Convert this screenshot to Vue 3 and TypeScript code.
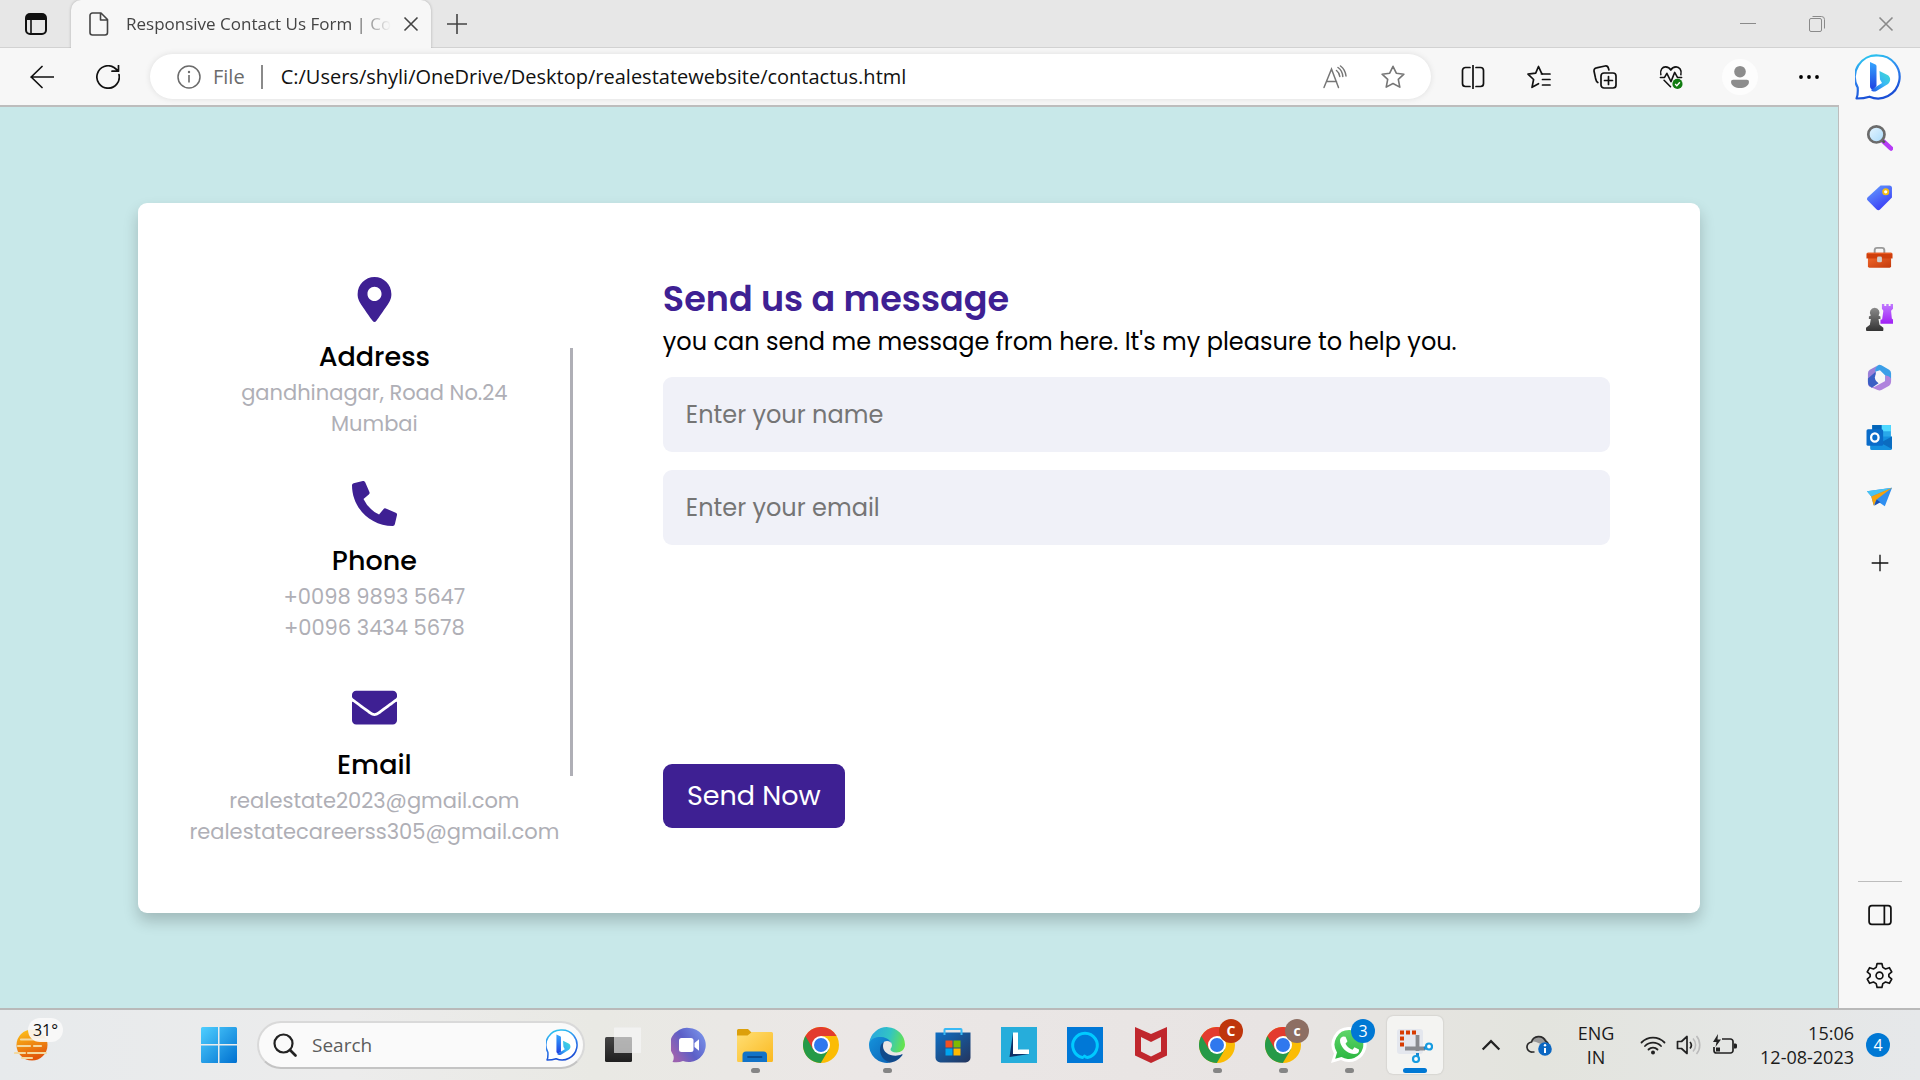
<script setup lang="ts">
import { ref } from 'vue'

interface Contact {
  topic: string
  icon: string
  lines: string[]
}

interface TaskApp {
  label: string
  icon: string
  running?: boolean
  active?: boolean
  badge?: string
  badgeClass?: string
}

const contacts: Contact[] = [
  { topic: 'Address', icon: 'pin', lines: ['gandhinagar, Road No.24', 'Mumbai'] },
  { topic: 'Phone', icon: 'phone', lines: ['+0098 9893 5647', '+0096 3434 5678'] },
  { topic: 'Email', icon: 'envelope', lines: ['realestate2023@gmail.com', 'realestatecareerss305@gmail.com'] },
]

const sideTools = [
  { label: 'Search', icon: 'lens' },
  { label: 'Shopping', icon: 'tag' },
  { label: 'Tools', icon: 'toolbox' },
  { label: 'Games', icon: 'chess' },
  { label: 'Microsoft 365', icon: 'm365' },
  { label: 'Outlook', icon: 'outlook' },
  { label: 'Drop', icon: 'plane' },
]

const pageActions = [
  { label: 'Split screen', icon: 'split' },
  { label: 'Favorites', icon: 'favorites' },
  { label: 'Collections', icon: 'collections' },
  { label: 'Browser essentials', icon: 'essentials' },
]

const apps: TaskApp[] = [
  { label: 'Task view', icon: 'taskview' },
  { label: 'Chat', icon: 'chat' },
  { label: 'File Explorer', icon: 'explorer', running: true },
  { label: 'Chrome', icon: 'chrome' },
  { label: 'Edge', icon: 'edge', running: true },
  { label: 'Microsoft Store', icon: 'store' },
  { label: 'Lenovo', icon: 'lenovo' },
  { label: 'Alexa', icon: 'alexa' },
  { label: 'McAfee', icon: 'mcafee' },
  { label: 'Chrome profile 1', icon: 'chrome', running: true, badge: 'C', badgeClass: 'red' },
  { label: 'Chrome profile 2', icon: 'chrome', running: true, badge: 'c', badgeClass: 'brown' },
  { label: 'WhatsApp', icon: 'whatsapp', running: true, badge: '3', badgeClass: 'blue' },
  { label: 'Snipping Tool', icon: 'snip', running: true, active: true },
]

const url = ref('C:/Users/shyli/OneDrive/Desktop/realestatewebsite/contactus.html')
const name = ref('')
const email = ref('')
</script>

<template>
  <div class="desktop">
    <svg class="sprite" aria-hidden="true">
      <defs>
        <linearGradient id="gBing" x1="0" y1="0" x2="0.3" y2="1">
          <stop offset="0" stop-color="#2bd0ee" /><stop offset="0.5" stop-color="#2f86f0" /><stop offset="1" stop-color="#1a4fd6" />
        </linearGradient>
        <linearGradient id="gBingStem" x1="0" y1="0" x2="0" y2="1">
          <stop offset="0" stop-color="#35a6ff" /><stop offset="1" stop-color="#1f3fe0" />
        </linearGradient>
        <linearGradient id="gBingBowl" x1="1" y1="0" x2="0" y2="1">
          <stop offset="0" stop-color="#3fe0d0" /><stop offset="0.5" stop-color="#38b6f5" /><stop offset="1" stop-color="#1f55e8" />
        </linearGradient>
        <linearGradient id="gTag" x1="0" y1="0" x2="0.6" y2="1">
          <stop offset="0" stop-color="#67a3ff" /><stop offset="1" stop-color="#3a3df5" />
        </linearGradient>
        <linearGradient id="gLens" x1="0" y1="0" x2="1" y2="1">
          <stop offset="0" stop-color="#e8f6ff" /><stop offset="1" stop-color="#a9dafb" />
        </linearGradient>
        <linearGradient id="gPurple" x1="0" y1="0" x2="0" y2="1">
          <stop offset="0" stop-color="#c07aff" /><stop offset="1" stop-color="#a020f5" />
        </linearGradient>
        <linearGradient id="gPawn" x1="0" y1="0" x2="0" y2="1">
          <stop offset="0" stop-color="#8a8a8a" /><stop offset="1" stop-color="#333" />
        </linearGradient>
        <linearGradient id="gBox" x1="0" y1="0" x2="1" y2="1">
          <stop offset="0" stop-color="#f0662a" /><stop offset="1" stop-color="#c23a0c" />
        </linearGradient>
        <linearGradient id="gWin" x1="0" y1="0" x2="1" y2="1">
          <stop offset="0" stop-color="#4fcfff" /><stop offset="1" stop-color="#0070d0" />
        </linearGradient>
        <linearGradient id="gChat" x1="0" y1="0.6" x2="1" y2="0">
          <stop offset="0" stop-color="#9b62b0" /><stop offset="0.4" stop-color="#5b5fc7" /><stop offset="1" stop-color="#7f9cf0" />
        </linearGradient>
        <linearGradient id="gFolder" x1="0" y1="0" x2="1" y2="1">
          <stop offset="0" stop-color="#ffdf75" /><stop offset="1" stop-color="#fbb920" />
        </linearGradient>
        <linearGradient id="gStore" x1="0" y1="0" x2="1" y2="1">
          <stop offset="0" stop-color="#0f6fc4" /><stop offset="1" stop-color="#24345c" />
        </linearGradient>
        <linearGradient id="gEdgeTop" x1="0" y1="0.3" x2="1" y2="0.5">
          <stop offset="0" stop-color="#2aa6df" /><stop offset="0.55" stop-color="#32c4c4" /><stop offset="1" stop-color="#66e34f" />
        </linearGradient>
        <linearGradient id="gEdgeLow" x1="0" y1="0" x2="1" y2="1">
          <stop offset="0" stop-color="#1593dc" /><stop offset="1" stop-color="#0c62b5" />
        </linearGradient>
        <linearGradient id="gSun" x1="0" y1="0" x2="0.3" y2="1">
          <stop offset="0" stop-color="#ffc81a" /><stop offset="1" stop-color="#e2570b" />
        </linearGradient>
        <linearGradient id="gBlack" x1="0" y1="0" x2="0" y2="1">
          <stop offset="0" stop-color="#454545" /><stop offset="1" stop-color="#1f1f1f" />
        </linearGradient>
        <linearGradient id="gWa" x1="0" y1="0" x2="0" y2="1">
          <stop offset="0" stop-color="#5fd66a" /><stop offset="1" stop-color="#2db742" />
        </linearGradient>
      </defs>

      <symbol id="workspaces" viewBox="0 0 24 24">
        <rect x="2" y="2" width="20" height="20" rx="4" fill="none" stroke="#111" stroke-width="2" />
        <path d="M2 8V5a3 3 0 0 1 3-3h14a3 3 0 0 1 3 3v3z" fill="#111" /><path d="M7 8v14" stroke="#111" stroke-width="1.6" />
      </symbol>
      <symbol id="page" viewBox="0 0 20 24">
        <path d="M3.500 1h8.500l6.500 6.500V20.500a2.500 2.500 0 0 1-2.500 2.500H3.500A2.500 2.500 0 0 1 1 20.500V3.500A2.500 2.500 0 0 1 3.500 1zM11.500 1.500V8h6.500" fill="none" stroke="#444" stroke-width="1.600" stroke-linejoin="round" />
      </symbol>
      <symbol id="cross" viewBox="0 0 16 16"><path d="M1.500 1.500l13 13M14.500 1.500l-13 13" stroke="currentColor" stroke-width="1.600" fill="none" /></symbol>
      <symbol id="plus" viewBox="0 0 24 24"><path d="M12 2v20M2 12h20" stroke="currentColor" stroke-width="1.600" fill="none" /></symbol>
      <symbol id="minimize" viewBox="0 0 16 16"><path d="M0 7.500h16" stroke="currentColor" /></symbol>
      <symbol id="restore" viewBox="0 0 16 16">
        <rect x="0.500" y="2.500" width="12" height="13" rx="1.500" fill="none" stroke="currentColor" /><path d="M3.500 0.500h9a3 3 0 0 1 3 3v9" fill="none" stroke="currentColor" />
      </symbol>
      <symbol id="back" viewBox="0 0 24 24"><path d="M23.500 12H1M12 1.500L1.200 12 12 22.500" fill="none" stroke="#111" stroke-width="1.700" stroke-linejoin="round" stroke-linecap="round" /></symbol>
      <symbol id="reload" viewBox="0 0 24 24">
        <path d="M23 9.500A11.200 11.200 0 1 1 18 2.500L22.500 6M22.500 0.500V6.200H16" fill="none" stroke="#111" stroke-width="1.700" stroke-linejoin="round" stroke-linecap="round" />
      </symbol>
      <symbol id="info" viewBox="0 0 24 24">
        <circle cx="12" cy="12" r="11" fill="none" stroke="#6b6b6b" stroke-width="1.500" /><path d="M12 10v7.500" stroke="#6b6b6b" stroke-width="1.600" /><circle cx="12" cy="7" r="1.200" fill="#6b6b6b" />
      </symbol>
      <symbol id="readaloud" viewBox="0 0 24 24">
        <path d="M1 22.500L8.500 4l7 18.500M3.500 16.500h10M13.500 5.500c2 1.500 3 3.500 3.300 6M15 2.500c3 2 4.500 5 4.800 9M17.500 1c3.500 2.500 5 6 5.500 10" fill="none" stroke="#767676" stroke-width="1.500" stroke-linecap="round" />
      </symbol>
      <symbol id="star" viewBox="0 0 24 24">
        <path d="M12 1.300l3.300 6.900 7.600 1-5.600 5.200 1.500 7.700L12 18.500l-6.800 3.600 1.500-7.700L1.100 9.200l7.600-1z" fill="none" stroke="#767676" stroke-width="1.600" stroke-linejoin="round" />
      </symbol>
      <symbol id="split" viewBox="0 0 24 24">
        <path d="M9 2.500H4.500A3 3 0 0 0 1.500 5.500v13a3 3 0 0 0 3 3H9M15 2.500h4.500a3 3 0 0 1 3 3v13a3 3 0 0 1-3 3H15M12 0.500v23" fill="none" stroke="#111" stroke-width="1.700" stroke-linecap="round" />
      </symbol>
      <symbol id="favorites" viewBox="0 0 24 24">
        <path d="M15.500 9l-1-.8L11.500 1.500 8.700 8.200 1 9.200l5.600 5.300L5 22.300l6.500-3.600M14.500 9H23M15.500 14.500H23M15.500 20H23" fill="none" stroke="#111" stroke-width="1.700" stroke-linecap="round" stroke-linejoin="round" />
      </symbol>
      <symbol id="collections" viewBox="0 0 24 24">
        <rect x="8" y="8" width="15" height="15" rx="3" fill="none" stroke="#111" stroke-width="1.700" />
        <path d="M15.500 11.500v8M11.500 15.500h8M4.800 17.500C3 16.500 3 15 2.500 13L1.100 6.500C.7 4.500 1.800 3.200 3.500 2.900l8.500-1.900c1.800-.4 3 .6 3.500 2.500l.4 1.500" fill="none" stroke="#111" stroke-width="1.700" stroke-linecap="round" />
      </symbol>
      <symbol id="essentials" viewBox="0 0 26 26">
        <path d="M2 10.500C.8 5 4 2 7 2c2.500 0 4.500 1 5.800 3.500C14 3 16 2 18.500 2c3.500 0 6.500 3.500 5.200 8.500M1.500 13.500H6L8.500 9l4.500 9 4-10 3 5.500h4.500M5.500 16.500l7 7" fill="none" stroke="#111" stroke-width="1.700" stroke-linejoin="round" stroke-linecap="round" />
        <circle cx="20" cy="20.500" r="5.500" fill="#107c10" /><path d="M17.500 20.700l1.800 1.800 3.300-3.800" fill="none" stroke="#fff" stroke-width="1.500" />
      </symbol>
      <symbol id="profile" viewBox="0 0 34 34">
        <circle cx="17" cy="17" r="17" fill="#fdfdfd" /><circle cx="17" cy="12" r="5.500" fill="#8c8c8c" /><path d="M10.500 19.500h13a2 2 0 0 1 2 2c0 4-4.500 6-8.500 6s-8.500-2-8.500-6a2 2 0 0 1 2-2z" fill="#8c8c8c" />
      </symbol>
      <symbol id="dots" viewBox="0 0 24 24"><circle cx="4" cy="12" r="1.900" /><circle cx="12" cy="12" r="1.900" /><circle cx="20" cy="12" r="1.900" /></symbol>
      <symbol id="bing" viewBox="0 0 46 46">
        <path d="M23 1.500a21.500 21.500 0 1 1-8.500 41.200C10.500 44 6 44.500 1.500 44.500c1.500-3 1.500-6 1.200-11A21.500 21.500 0 0 1 23 1.500z" fill="#fff" stroke="url(#gBing)" stroke-width="2.200" stroke-linejoin="round" />
        <path d="M15 8l5.500 2.500c.6.300 1 .9 1 1.500v20L18 36c-1.800-.6-3-2-3-4z" fill="url(#gBingStem)" />
        <path d="M24.500 17l8 4c3.500 2 3.500 6.500.5 9L21.500 37c-2 1-4.200.6-5.500-1l11-7-2-3.500z" fill="url(#gBingBowl)" />
      </symbol>

      <symbol id="lens" viewBox="0 0 26 26">
        <path d="M16.500 16.500L24 23.500" stroke="#b63bf5" stroke-width="4.500" stroke-linecap="round" /><path d="M14 14l4 4" stroke="#555" stroke-width="2.500" />
        <circle cx="10" cy="10" r="7.800" fill="url(#gLens)" stroke="#6b6b6b" stroke-width="2.600" />
      </symbol>
      <symbol id="tag" viewBox="0 0 26 26">
        <path d="M14 1.500h8.500A2.500 2.500 0 0 1 25 4v9l-11.500 11.500a2.300 2.300 0 0 1-3.200 0L1.700 16a2.300 2.300 0 0 1 0-3.200z" fill="url(#gTag)" /><circle cx="19" cy="7.500" r="2.500" fill="#fff" stroke="#f4bd12" stroke-width="1.800" />
      </symbol>
      <symbol id="toolbox" viewBox="0 0 28 24">
        <path d="M9 8V4.500A2.500 2.500 0 0 1 11.500 2h5A2.500 2.500 0 0 1 19 4.500V8" fill="none" stroke="#9a9a9a" stroke-width="2" />
        <rect x="2" y="12" width="24" height="10.500" rx="1.500" fill="url(#gBox)" /><path d="M2 7h24a1.500 1.500 0 0 1 1.500 1.500V13h-27V8.500A1.500 1.500 0 0 1 2 7z" fill="#cf3f0c" /><path d="M2 7h24l1 1H1z" fill="#f0662a" /><rect x="11.500" y="11" width="5" height="6" rx="1.500" fill="#cfcfcf" />
      </symbol>
      <symbol id="chess" viewBox="0 0 28 28">
        <path d="M16.500 0h2.500v2h2V0h2.500v2h2V0H28v5l-2 2 .8 8 1.200 1v4.500H15V16h1.700l1.300-9-1.500-2z" fill="url(#gPurple)" />
        <path d="M9 4a5 5 0 0 1 4 8l2 1v2.500h-2l1 6 4 3v2.500c0 .6-.4 1-1 1H1c-.6 0-1-.4-1-1v-2.500l4-3 1-6H3V13l2-1a5 5 0 0 1 4-8z" fill="url(#gPawn)" />
      </symbol>
      <symbol id="m365" viewBox="0 0 26 28">
        <path d="M12 1L3 6Q1 7.200 1 9.500v11c0 1.500 1 2.500 2 3l6-4V7c0-3 1-5 3-6z" fill="#9b80d8" />
        <path d="M12 1c-2.500 1.500-3.500 3.500-3.500 6v1l5-1.500 5.500 5.500V23l5-4q1-1 1-2.500V9.500Q25 7.200 23 6l-8-4.600Q13.500.600 12 1z" fill="#3b9fe8" />
        <path d="M19 12v5.500L8 23.500l-5.500-.2L11 27q2 1 4 0l8-4.500q2-1.500 2-4V16c0-2.500-4-4-6-4z" fill="#b084dd" />
        <path d="M9 8v9l3 3-7 4.500Q1 22.500 1 18.500V15l8-7z" fill="#3a5fc4" /><circle cx="13" cy="14" r="4.800" fill="#f7f7f7" />
      </symbol>
      <symbol id="outlook" viewBox="0 0 26 26">
        <path d="M6 1h18v14H6z" fill="#28a8ea" /><path d="M15 1h9v6h-9z" fill="#50d9ff" /><path d="M6 1h9v6H6z" fill="#0364b8" /><path d="M4 12l21 0v11.500a1.500 1.500 0 0 1-1.500 1.500h-18A1.500 1.500 0 0 1 4 23.500z" fill="#1490df" /><path d="M25 12v12L14 18z" fill="#0b6cc0" />
        <rect x="0.500" y="5" width="16" height="16" rx="1.500" fill="#0a6cc9" /><ellipse cx="8.500" cy="13" rx="3.600" ry="4" fill="none" stroke="#fff" stroke-width="2.200" />
      </symbol>
      <symbol id="plane" viewBox="0 0 28 24">
        <path d="M1 5.500L27 2 19.500 21l-7.500-5-4 4-2.500-9z" fill="#2f8ff0" /><path d="M1 5.500L27 2 5.500 11z" fill="#48c3f2" /><path d="M5.500 11L27 2 11 14l-3 6.500z" fill="#f5a30c" /><path d="M11 14l4 3-6.500 3.500z" fill="#174fb5" />
      </symbol>
      <symbol id="panel" viewBox="0 0 22 20"><rect x="1" y="1.500" width="20" height="17" rx="2.500" fill="none" stroke="#111" stroke-width="1.600" /><path d="M15 1.500v17" stroke="#111" stroke-width="1.600" /></symbol>
      <symbol id="gear" viewBox="0 0 26 26">
        <path d="M10.700 1.500h4.600l.9 3.700 2.600 1.500 3.700-1.200 2.300 4-2.800 2.500v2l2.800 2.500-2.300 4-3.700-1.200-2.600 1.500-.9 3.700h-4.600l-.9-3.700-2.600-1.500-3.700 1.200-2.300-4L4 14V12L1.200 9.500l2.300-4 3.700 1.200 2.600-1.500z" fill="none" stroke="#111" stroke-width="1.600" stroke-linejoin="round" /><circle cx="13" cy="13" r="3.300" fill="none" stroke="#111" stroke-width="1.600" />
      </symbol>

      <symbol id="pin" viewBox="0 0 512 512">
        <path transform="translate(64 0)" d="M172.268 501.670C26.970 291.031 0 269.413 0 192 0 85.961 85.961 0 192 0s192 85.961 192 192c0 77.413-26.970 99.031-172.268 309.670-9.535 13.774-29.930 13.773-39.464 0zM192 272c44.183 0 80-35.817 80-80s-35.817-80-80-80-80 35.817-80 80 35.817 80 80 80z" />
      </symbol>
      <symbol id="phone" viewBox="0 0 512 512">
        <path d="M497.390 361.800l-112-48a24 24 0 0 0-28 6.900l-49.600 60.600A370.660 370.660 0 0 1 130.600 204.110l60.600-49.600a23.940 23.940 0 0 0 6.900-28l-48-112A24.160 24.160 0 0 0 122.600.610l-104 24A24 24 0 0 0 0 48c0 256.500 207.900 464 464 464a24 24 0 0 0 23.400-18.600l24-104a24.290 24.290 0 0 0-14.010-27.600z" />
      </symbol>
      <symbol id="envelope" viewBox="0 0 512 512">
        <path d="M502.300 190.800c3.900-3.100 9.700-.2 9.700 4.700V400c0 26.500-21.500 48-48 48H48c-26.500 0-48-21.500-48-48V195.600c0-5 5.700-7.800 9.700-4.700 22.400 17.400 52.100 39.500 154.100 113.600 21.100 15.400 56.700 47.800 92.200 47.600 35.700.3 72-32.800 92.300-47.600 102-74.100 131.600-96.300 154-113.700zM256 320c23.200.4 56.600-29.200 73.400-41.400 132.700-96.300 142.800-104.700 173.400-128.700 5.800-4.500 9.200-11.500 9.200-18.900v-19c0-26.500-21.500-48-48-48H48c-26.500 0-48 21.500-48 48v19c0 7.400 3.400 14.300 9.200 18.900 30.600 23.900 40.700 32.400 173.400 128.700 16.800 12.200 50.200 41.800 73.400 41.400z" />
      </symbol>

      <symbol id="weather" viewBox="0 0 36 36">
        <circle cx="18" cy="18" r="15.500" fill="url(#gSun)" />
        <path d="M7 12.500h26M4 19h12M20 19h7M1 26h10M14 26h18M8 31h10" stroke="#f3d9a0" stroke-width="2.200" stroke-linecap="round" />
      </symbol>
      <symbol id="windows" viewBox="0 0 36 36">
        <path d="M0 1.500A1.500 1.500 0 0 1 1.500 0H17v17H0zM18.500 0h16A1.500 1.500 0 0 1 36 1.500V17H18.500zM0 18.500h17V36H1.500A1.500 1.500 0 0 1 0 34.500zM18.500 18.500H36v16a1.500 1.500 0 0 1-1.500 1.500h-16z" fill="url(#gWin)" />
      </symbol>
      <symbol id="magnifier" viewBox="0 0 24 24"><circle cx="10.500" cy="10.500" r="9" fill="none" stroke="#222" stroke-width="2.200" /><path d="M17 17l5.500 5.500" stroke="#222" stroke-width="2.600" stroke-linecap="round" /></symbol>
      <symbol id="taskview" viewBox="0 0 36 36"><rect x="0" y="10" width="27" height="25" rx="1.500" fill="url(#gBlack)" /><rect x="9" y="0.500" width="27" height="25.500" rx="1.500" fill="#f6f6f6" fill-opacity="0.350" /><path d="M9 .5h27V26h-9V10H9z" fill="#f2f2f2" fill-opacity="0.850" /><path d="M9 10h18v16H9z" fill="#c9c9c9" fill-opacity="0.700" /></symbol>
      <symbol id="chat" viewBox="0 0 36 36">
        <path d="M18 1a17 17 0 1 1-6 33q-4.500 2-10.500 1 2-3 .8-7A17 17 0 0 1 18 1z" fill="url(#gChat)" /><rect x="8" y="11" width="14.500" height="14" rx="2.500" fill="#fff" /><path d="M23.500 16l4.500-3.800v11.600L23.500 20z" fill="#fff" />
      </symbol>
      <symbol id="explorer" viewBox="0 0 36 36">
        <path d="M0 3.500A1.500 1.500 0 0 1 1.500 2H11l4 4-4 4H0z" fill="#dca00b" /><path d="M0 8.500h10.500L15 5h19.500A1.500 1.500 0 0 1 36 6.500v27A1.500 1.500 0 0 1 34.500 35h-33A1.500 1.500 0 0 1 0 33.500z" fill="url(#gFolder)" />
        <path d="M5.500 35v-7A3.500 3.500 0 0 1 9 24.500h17.500A3.500 3.500 0 0 1 30 28v7z" fill="#1273c8" /><path d="M11 30h13.500" stroke="#0a4c92" stroke-width="1.800" stroke-linecap="round" />
      </symbol>
      <symbol id="chrome" viewBox="0 0 36 36">
        <circle cx="18" cy="18" r="18" fill="#fbbc04" />
        <path d="M18 18L2.400 9A18 18 0 0 0 17.800 36L25.800 22.500z" fill="#259a48" />
        <path d="M18 18L10.200 22.500 2.400 9A18 18 0 0 1 33.600 9H18z" fill="#e33b2e" />
        <circle cx="18" cy="18" r="9" fill="#fff" /><circle cx="18" cy="18" r="7" fill="#2f78ee" />
      </symbol>
      <symbol id="edge" viewBox="0 0 36 36">
        <path d="M.2 15.500A18 18 0 0 1 36 17.500c0 5-4 8-8.500 8-4 0-6-1.500-6-3 0-1.300 1.500-2 1.500-4.500 0-3.500-4-6.500-9-6.500C8.500 11.500 3.500 13 .2 15.500z" fill="url(#gEdgeTop)" />
        <path d="M.2 15.500C3 11 8 9.500 12.500 10c6 .6 10 4 10.500 8-.5-2.500-2.500-4-5-4-3.500 0-6 3.500-6 8 0 7 5 11.500 10 13.500A18 18 0 0 1 .2 15.500z" fill="url(#gEdgeLow)" />
        <path d="M15 14.700c-3 1.500-4 4.500-4 8C11 30 17 35 22 35.500c5-.7 9-4 11.500-7.500.3-.6-.2-1-.8-.7-2 1-4 1.400-6.200 1.400-7 0-12.500-4-12.500-9.500 0-1.700.5-3.300 1-4.500z" fill="#114a8b" />
      </symbol>
      <symbol id="store" viewBox="0 0 36 36">
        <path d="M.5 5.500h35v25A5 5 0 0 1 30.500 35.500h-25A5 5 0 0 1 .5 30.500z" fill="url(#gStore)" /><path d="M9.500 8V2.800Q9.500 2 10.300 2h15.400q.8 0 .8.800V8" fill="none" stroke="#39b9f5" stroke-width="2" />
        <path d="M10.500 13.500h7v7h-7z" fill="#f25022" /><path d="M18.500 13.500h7v7h-7z" fill="#7fba00" /><path d="M10.500 21.500h7v7h-7z" fill="#00a4ef" /><path d="M18.500 21.500h7v7h-7z" fill="#ffb900" />
      </symbol>
      <symbol id="lenovo" viewBox="0 0 36 36"><path d="M0 0h36v36H0z" fill="#26addb" /><path d="M12 6L8.500 30 28 27 16 22z" fill="#0f2f66" /><path d="M12 5.500h5v17h11V27H12z" fill="#fff" /></symbol>
      <symbol id="alexa" viewBox="0 0 36 36"><path d="M0 0h36v36H0z" fill="#0078d7" /><path d="M15.500 30.500A12.300 12.300 0 1 1 20.500 30.500Q19 30.500 17.500 29" fill="none" stroke="#00caff" stroke-width="3" stroke-linecap="round" /></symbol>
      <symbol id="mcafee" viewBox="0 0 36 36"><path d="M2 0l16 7L34 0v28.500L18 36 2 28.500zM8 10v14.500l10 5 10-5V10l-10 5z" fill="#c0272d" /></symbol>
      <symbol id="whatsapp" viewBox="0 0 36 36">
        <path d="M18.500 0A17.500 17.500 0 1 1 10 33L0 36l3-9.500A17.500 17.500 0 0 1 18.500 0z" fill="#fff" /><path d="M18.500 3A14.500 14.500 0 1 1 10.500 30L4.200 31.700 6 25.500A14.500 14.500 0 0 1 18.500 3z" fill="url(#gWa)" />
        <path d="M12 9.500l2.500.3 2 4.500-2 2.500q2.500 4.500 7 6l2-2.500 4.500 2.200q.5 4.500-5 4.500C15 26.500 9 19 9 13.500q0-3 3-4z" fill="#fff" />
      </symbol>
      <symbol id="snip" viewBox="0 0 36 36">
        <rect x="0" y="2" width="26" height="25" rx="3" fill="#e4e7ee" />
        <path d="M3 3.500h4v4H3zM9 3.500h4v4H9zM15 3.500h4v4h-4zM3 9.500h4v4H3zM3 15.500h4v4H3z" fill="#d83b01" />
        <path d="M20.500 8v16M8 21.500h20" stroke="#87898e" stroke-width="3.800" /><path d="M27 21.500l3-1M20.500 26v4" stroke="#1a86cf" stroke-width="3" /><circle cx="32" cy="19.500" r="3" fill="#fff" stroke="#169be0" stroke-width="2.200" /><circle cx="19" cy="32" r="3" fill="#fff" stroke="#169be0" stroke-width="2.200" />
      </symbol>
      <symbol id="chevron" viewBox="0 0 18 18"><path d="M1.500 13L9 5.500l7.500 7.500" fill="none" stroke="#222" stroke-width="2" /></symbol>
      <symbol id="cloud" viewBox="0 0 26 26">
        <path d="M2.500 14C4 9 8 9 10 10l12 5v-3C21 6 17 4 13 4.500 9 4.500 7 7 6 10q-3 1-3.500 4z" fill="#999" /><path d="M8.500 20H6.500a5 5 0 0 1-1-10 7.500 7.500 0 0 1 14-1q2.500 1 3 4" fill="none" stroke="#2a2a2a" stroke-width="1.700" />
        <circle cx="19" cy="17" r="6.800" fill="#0b67c2" /><path d="M19 16v5" stroke="#fff" stroke-width="2" /><circle cx="19" cy="13.300" r="1.200" fill="#fff" />
      </symbol>
      <symbol id="wifi" viewBox="0 0 26 22">
        <path d="M1.500 8.500a16 16 0 0 1 23 0M5 12a11 11 0 0 1 16 0M8.500 15.500a6.300 6.300 0 0 1 9 0" fill="none" stroke="#222" stroke-width="1.800" stroke-linecap="round" /><circle cx="13" cy="18.500" r="2" fill="#222" />
      </symbol>
      <symbol id="sound" viewBox="0 0 26 22">
        <path d="M1.500 7.500h4l5.500-5v17l-5.500-5h-4z" fill="none" stroke="#222" stroke-width="1.700" stroke-linejoin="round" /><path d="M14 8a5 5 0 0 1 0 6.500" fill="none" stroke="#222" stroke-width="1.700" /><path d="M17 4.500a9.500 9.500 0 0 1 0 13M20.500 2a14 14 0 0 1 0 18" fill="none" stroke="#bbb" stroke-width="1.600" />
      </symbol>
      <symbol id="battery" viewBox="0 0 26 22">
        <path d="M10 5h8.500A2.500 2.500 0 0 1 21 7.500v9a2.500 2.500 0 0 1-2.500 2.500h-14A2.500 2.500 0 0 1 2 16.500V13" fill="none" stroke="#222" stroke-width="1.700" /><path d="M22 9.500h1.500q1.500 0 1.500 1.500v2q0 1.500-1.500 1.500H22z" fill="#222" /><path d="M6 0L1 8h3.500L3.500 13 9 5.500H5.500zM4 13.500h4v4H4z" fill="#222" />
      </symbol>
    </svg>

    <header class="tabstrip">
      <button class="icon-btn workspace" aria-label="Tab actions"><svg class="i24"><use href="#workspaces" /></svg></button>
      <div class="tab">
        <svg class="file"><use href="#page" /></svg>
        <span class="tab-title">Responsive Contact Us Form | Co</span>
        <button class="icon-btn tab-close" aria-label="Close tab"><svg class="i16"><use href="#cross" /></svg></button>
      </div>
      <button class="icon-btn new-tab" aria-label="New tab"><svg class="i24"><use href="#plus" /></svg></button>
      <div class="window-controls">
        <button class="icon-btn" aria-label="Minimize"><svg class="i16"><use href="#minimize" /></svg></button>
        <button class="icon-btn" aria-label="Restore"><svg class="i16"><use href="#restore" /></svg></button>
        <button class="icon-btn" aria-label="Close"><svg class="i16"><use href="#cross" /></svg></button>
      </div>
    </header>

    <nav class="toolbar" aria-label="Browser toolbar">
      <div class="nav-group">
        <button class="icon-btn" aria-label="Back"><svg class="i24"><use href="#back" /></svg></button>
        <button class="icon-btn" aria-label="Refresh"><svg class="i24"><use href="#reload" /></svg></button>
      </div>
      <div class="address">
        <svg class="i24"><use href="#info" /></svg>
        <label class="scheme" for="url">File</label>
        <span class="bar"></span>
        <input id="url" v-model="url" type="text" />
        <button class="icon-btn" aria-label="Read aloud"><svg class="i24"><use href="#readaloud" /></svg></button>
        <button class="icon-btn" aria-label="Add to favorites"><svg class="i24"><use href="#star" /></svg></button>
      </div>
      <div class="nav-group">
        <button v-for="a in pageActions" :key="a.icon" class="icon-btn" :aria-label="a.label"><svg class="i24"><use :href="'#' + a.icon" /></svg></button>
      </div>
      <div class="menu-group">
        <button class="icon-btn" aria-label="Profile"><svg class="i36"><use href="#profile" /></svg></button>
        <button class="icon-btn" aria-label="Settings and more"><svg class="i24"><use href="#dots" /></svg></button>
        <button class="icon-btn" aria-label="Bing chat"><svg class="i46"><use href="#bing" /></svg></button>
      </div>
    </nav>

    <div class="browser">
      <main class="page">
        <section class="card">
          <div class="contacts">
            <div v-for="c in contacts" :key="c.topic" class="contact">
              <svg class="contact-icon"><use :href="'#' + c.icon" /></svg>
              <h2>{{ c.topic }}</h2>
              <p v-for="line in c.lines" :key="line">{{ line }}</p>
            </div>
          </div>
          <div class="divider"></div>
          <form class="message" @submit.prevent>
            <h1>Send us a message</h1>
            <p>you can send me message from here. It's my pleasure to help you.</p>
            <input v-model="name" type="text" placeholder="Enter your name" aria-label="Enter your name" />
            <input v-model="email" type="text" placeholder="Enter your email" aria-label="Enter your email" />
            <button type="submit">Send Now</button>
          </form>
        </section>
      </main>
      <aside class="sidebar">
        <div class="side-group">
          <button v-for="t in sideTools" :key="t.icon" class="icon-btn" :aria-label="t.label"><svg class="i28"><use :href="'#' + t.icon" /></svg></button>
          <button class="icon-btn add" aria-label="Customize"><svg class="i20"><use href="#plus" /></svg></button>
        </div>
        <div class="side-group side-bottom">
          <button class="icon-btn" aria-label="Toggle sidebar"><svg class="i24"><use href="#panel" /></svg></button>
          <button class="icon-btn" aria-label="Settings"><svg class="i28"><use href="#gear" /></svg></button>
        </div>
      </aside>
    </div>

    <footer class="taskbar">
      <button class="weather" aria-label="Weather"><svg class="i36"><use href="#weather" /></svg><span class="temp">31°</span></button>
      <div class="apps">
        <button class="app" aria-label="Start"><svg class="i36"><use href="#windows" /></svg></button>
        <label class="search">
          <svg class="i24"><use href="#magnifier" /></svg>
          <input type="text" placeholder="Search" aria-label="Search" />
          <svg class="i32"><use href="#bing" /></svg>
        </label>
        <button v-for="app in apps" :key="app.label" class="app" :class="{ running: app.running, active: app.active }" :aria-label="app.label">
          <svg class="i36"><use :href="'#' + app.icon" /></svg>
          <span v-if="app.badge" class="badge" :class="app.badgeClass">{{ app.badge }}</span>
        </button>
      </div>
      <div class="tray">
        <svg class="i20"><use href="#chevron" /></svg>
        <svg class="i26 cloud"><use href="#cloud" /></svg>
        <div class="lang"><span>ENG</span><span>IN</span></div>
        <div class="status">
          <svg class="i26"><use href="#wifi" /></svg>
          <svg class="i26"><use href="#sound" /></svg>
          <svg class="i26"><use href="#battery" /></svg>
        </div>
        <div class="clock"><span>15:06</span><span>12-08-2023</span></div>
        <span class="count">4</span>
      </div>
    </footer>
  </div>
</template>

<style>
body {
  margin: 0;
}
</style>

<style scoped>
* {
  box-sizing: border-box;
}
.desktop {
  min-height: 100vh;
  display: flex;
  flex-direction: column;
  font-family: "Segoe UI", "Open Sans", "Noto Sans", sans-serif;
  color: #1b1b1b;
}
.sprite {
  position: absolute;
  width: 0;
  height: 0;
}
svg {
  display: block;
  flex: none;
}
.i16 { width: 16px; height: 16px; }
.i20 { width: 20px; height: 20px; }
.i24 { width: 24px; height: 24px; }
.i26 { width: 26px; height: 26px; }
.i28 { width: 27px; height: 27px; }
.i32 { width: 32px; height: 32px; }
.i36 { width: 36px; height: 36px; }
.i46 { width: 46px; height: 46px; }
.icon-btn {
  width: 44px;
  height: 44px;
  padding: 0;
  border: 0;
  background: none;
  display: flex;
  align-items: center;
  justify-content: center;
  flex: none;
  color: inherit;
}

.tabstrip {
  display: flex;
  align-items: center;
  height: 48px;
  padding-left: 14px;
  background: #e7e7e7;
  border-bottom: 1px solid #d2d2d2;
}
.tab {
  display: flex;
  align-items: center;
  width: 360px;
  height: 48px;
  margin-left: 13px;
  margin-bottom: -1px;
  padding: 0 4px 0 18px;
  background: #f7f7f7;
  border-radius: 10px 10px 0 0;
  box-shadow: 0 0 3px rgba(0, 0, 0, 0.25);
  clip-path: inset(0 -4px 0 -4px);
  color: #444;
}
.file {
  width: 20px;
  height: 24px;
}
.tab-title {
  flex: 1;
  margin-left: 17px;
  white-space: nowrap;
  font-size: 17px;
  line-height: 24px;
  -webkit-mask-image: linear-gradient(to right, #000 85%, transparent);
  mask-image: linear-gradient(to right, #000 85%, transparent);
}
.tab-close {
  width: 40px;
}
.new-tab {
  margin-left: 4px;
  color: #444;
}
.window-controls {
  display: flex;
  gap: 25px;
  margin-left: auto;
  padding-right: 12px;
  color: #8a8a8a;
}

.toolbar {
  display: flex;
  align-items: center;
  height: 57px;
  padding: 0 20px;
  background: #f7f7f7;
}
.nav-group {
  display: flex;
  gap: 22px;
}
.menu-group {
  display: flex;
  gap: 25px;
  margin-left: 25px;
}
.address {
  flex: 1;
  display: flex;
  align-items: center;
  height: 45px;
  margin: 0 20px;
  padding: 0 16px 0 27px;
  border-radius: 23px;
  background: #fff;
  box-shadow: 0 0 6px rgba(0, 0, 0, 0.1);
}
.address .icon-btn + .icon-btn {
  margin-left: 14px;
}
.scheme {
  margin-left: 12px;
  font-size: 20px;
  color: #6b6b6b;
}
.bar {
  width: 2px;
  height: 24px;
  margin: 0 18px 0 16px;
  background: #8a8a8a;
}
.address input {
  flex: 1;
  min-width: 0;
  padding: 0;
  border: 0;
  outline: 0;
  background: none;
  font-family: inherit;
  font-size: 20px;
  color: #111;
}

.browser {
  flex: 1;
  display: flex;
}
.page {
  flex: 1;
  display: flex;
  align-items: center;
  justify-content: center;
  padding: 40px 0;
  border-top: 2px solid #bdbdbd;
  border-right: 1px solid #bdbdbd;
  background: #c8e8e9;
  font-family: "Poppins", "Inter", sans-serif;
}
.card {
  display: flex;
  width: 85%;
  padding: 74px 90px 66px 52px;
  border-radius: 9px;
  background: #fff;
  box-shadow: 0 8px 15px rgba(0, 0, 0, 0.2);
}
.contacts {
  display: flex;
  flex-direction: column;
  gap: 42px;
  width: 369px;
}
.contact {
  display: flex;
  flex-direction: column;
  align-items: center;
  color: #afafb6;
}
.contact-icon {
  width: 45px;
  height: 45px;
  margin-bottom: 15px;
  fill: #3e2093;
}
.contact h2 {
  margin: 0;
  font-size: 27px;
  line-height: 40px;
  font-weight: 500;
  color: #000;
}
.contact p {
  margin: 0;
  font-size: 21px;
  line-height: 31px;
  white-space: nowrap;
}
.divider {
  align-self: center;
  width: 3px;
  height: 428px;
  margin: 0 90px 0 11px;
  background: #afafb6;
}
.message {
  flex: 1;
  display: flex;
  flex-direction: column;
}
.message h1 {
  margin: 0 0 4px;
  font-size: 35px;
  line-height: 43px;
  font-weight: 600;
  color: #3e2093;
}
.message p {
  margin: 0 0 17px;
  font-size: 24px;
  line-height: 36px;
  color: #000;
}
.message input {
  height: 75px;
  margin-bottom: 18px;
  padding: 0 23px;
  border: 0;
  border-radius: 9px;
  background: #f0f1f8;
  font: inherit;
  font-size: 24px;
}
.message input::placeholder {
  color: #757575;
}
.message button {
  align-self: flex-start;
  width: 182px;
  height: 64px;
  margin: auto 0 19px;
  border: 0;
  border-radius: 9px;
  background: #3e2093;
  color: #fff;
  font: inherit;
  font-size: 27px;
  padding: 0;
}

.sidebar {
  display: flex;
  flex-direction: column;
  justify-content: space-between;
  align-items: center;
  width: 81px;
  padding: 10px 0 11px;
  background: #f7f7f7;
}
.side-group {
  display: flex;
  flex-direction: column;
  align-items: center;
  gap: 16px;
}
.side-bottom {
  padding-top: 11px;
  border-top: 1px solid #bdbdbd;
}
.add {
  margin-top: 6px;
  color: #111;
}

.taskbar {
  display: flex;
  align-items: center;
  height: 72px;
  border-top: 2px solid #b9b9b9;
  padding: 0 30px 0 14px;
  background: linear-gradient(to right, #e7eaec, #ececec 18%, #e9e9e4 31%, #ebe7e6 45%, #e8e4e3 66%, #e3e4de 80%, #e6e8ea);
}
.weather {
  position: relative;
  width: 50px;
  height: 56px;
  padding: 0;
  border: 0;
  background: none;
}
.temp {
  position: absolute;
  left: 14px;
  top: 1px;
  width: 35px;
  border-radius: 12px;
  background: rgba(250, 250, 250, 0.9);
  font-family: "Segoe UI", "Open Sans", "Noto Sans", sans-serif;
  font-size: 16px;
  line-height: 24px;
  color: #111;
}
.apps {
  display: flex;
  align-items: center;
  gap: 10px;
  margin-left: 127px;
}
.app {
  position: relative;
  width: 56px;
  height: 58px;
  padding: 0;
  border: 0;
  border-radius: 6px;
  background: none;
  display: flex;
  align-items: center;
  justify-content: center;
}
.app.active {
  background: #f4f4f2;
  box-shadow: 0 0 2px rgba(0, 0, 0, 0.2);
}
.app.running::after {
  content: "";
  position: absolute;
  bottom: 1px;
  width: 9px;
  height: 5px;
  border-radius: 3px;
  background: #858585;
}
.app.active::after {
  width: 24px;
  background: #0078d4;
}
.badge {
  position: absolute;
  right: 2px;
  top: 3px;
  width: 24px;
  height: 24px;
  border-radius: 50%;
  font-family: "Segoe UI", "Open Sans", "Noto Sans", sans-serif;
  font-size: 16px;
  line-height: 24px;
  color: #fff;
}
.red {
  background: #bf360c;
  font-weight: 700;
  font-size: 14px;
}
.brown {
  background: #8d6e63;
  font-weight: 700;
  font-size: 14px;
}
.blue {
  background: #0078d4;
}
.search {
  display: flex;
  align-items: center;
  width: 328px;
  height: 48px;
  padding: 0 5px 0 14px;
  border: 2px solid #d9d9d9;
  border-bottom-color: #c4c4c4;
  border-radius: 24px;
  background: #fafafa;
}
.search input {
  flex: 1;
  min-width: 0;
  margin-left: 15px;
  padding: 0;
  border: 0;
  background: none;
  font-family: inherit;
  font-size: 19px;
}
.search input::placeholder {
  color: #5c5c5c;
}
.tray {
  display: flex;
  align-items: center;
  margin-left: auto;
  font-size: 18px;
  line-height: 24px;
}
.cloud {
  margin-left: 25px;
}
.lang {
  display: flex;
  flex-direction: column;
  align-items: center;
  width: 36px;
  margin-left: 26px;
}
.status {
  display: flex;
  gap: 10px;
  margin-left: 26px;
}
.clock {
  display: flex;
  flex-direction: column;
  align-items: flex-end;
  margin-left: 22px;
}
.count {
  width: 24px;
  height: 24px;
  margin-left: 12px;
  border-radius: 50%;
  background: #0078d4;
  color: #fff;
  font-size: 16px;
  text-align: center;
}
</style>
